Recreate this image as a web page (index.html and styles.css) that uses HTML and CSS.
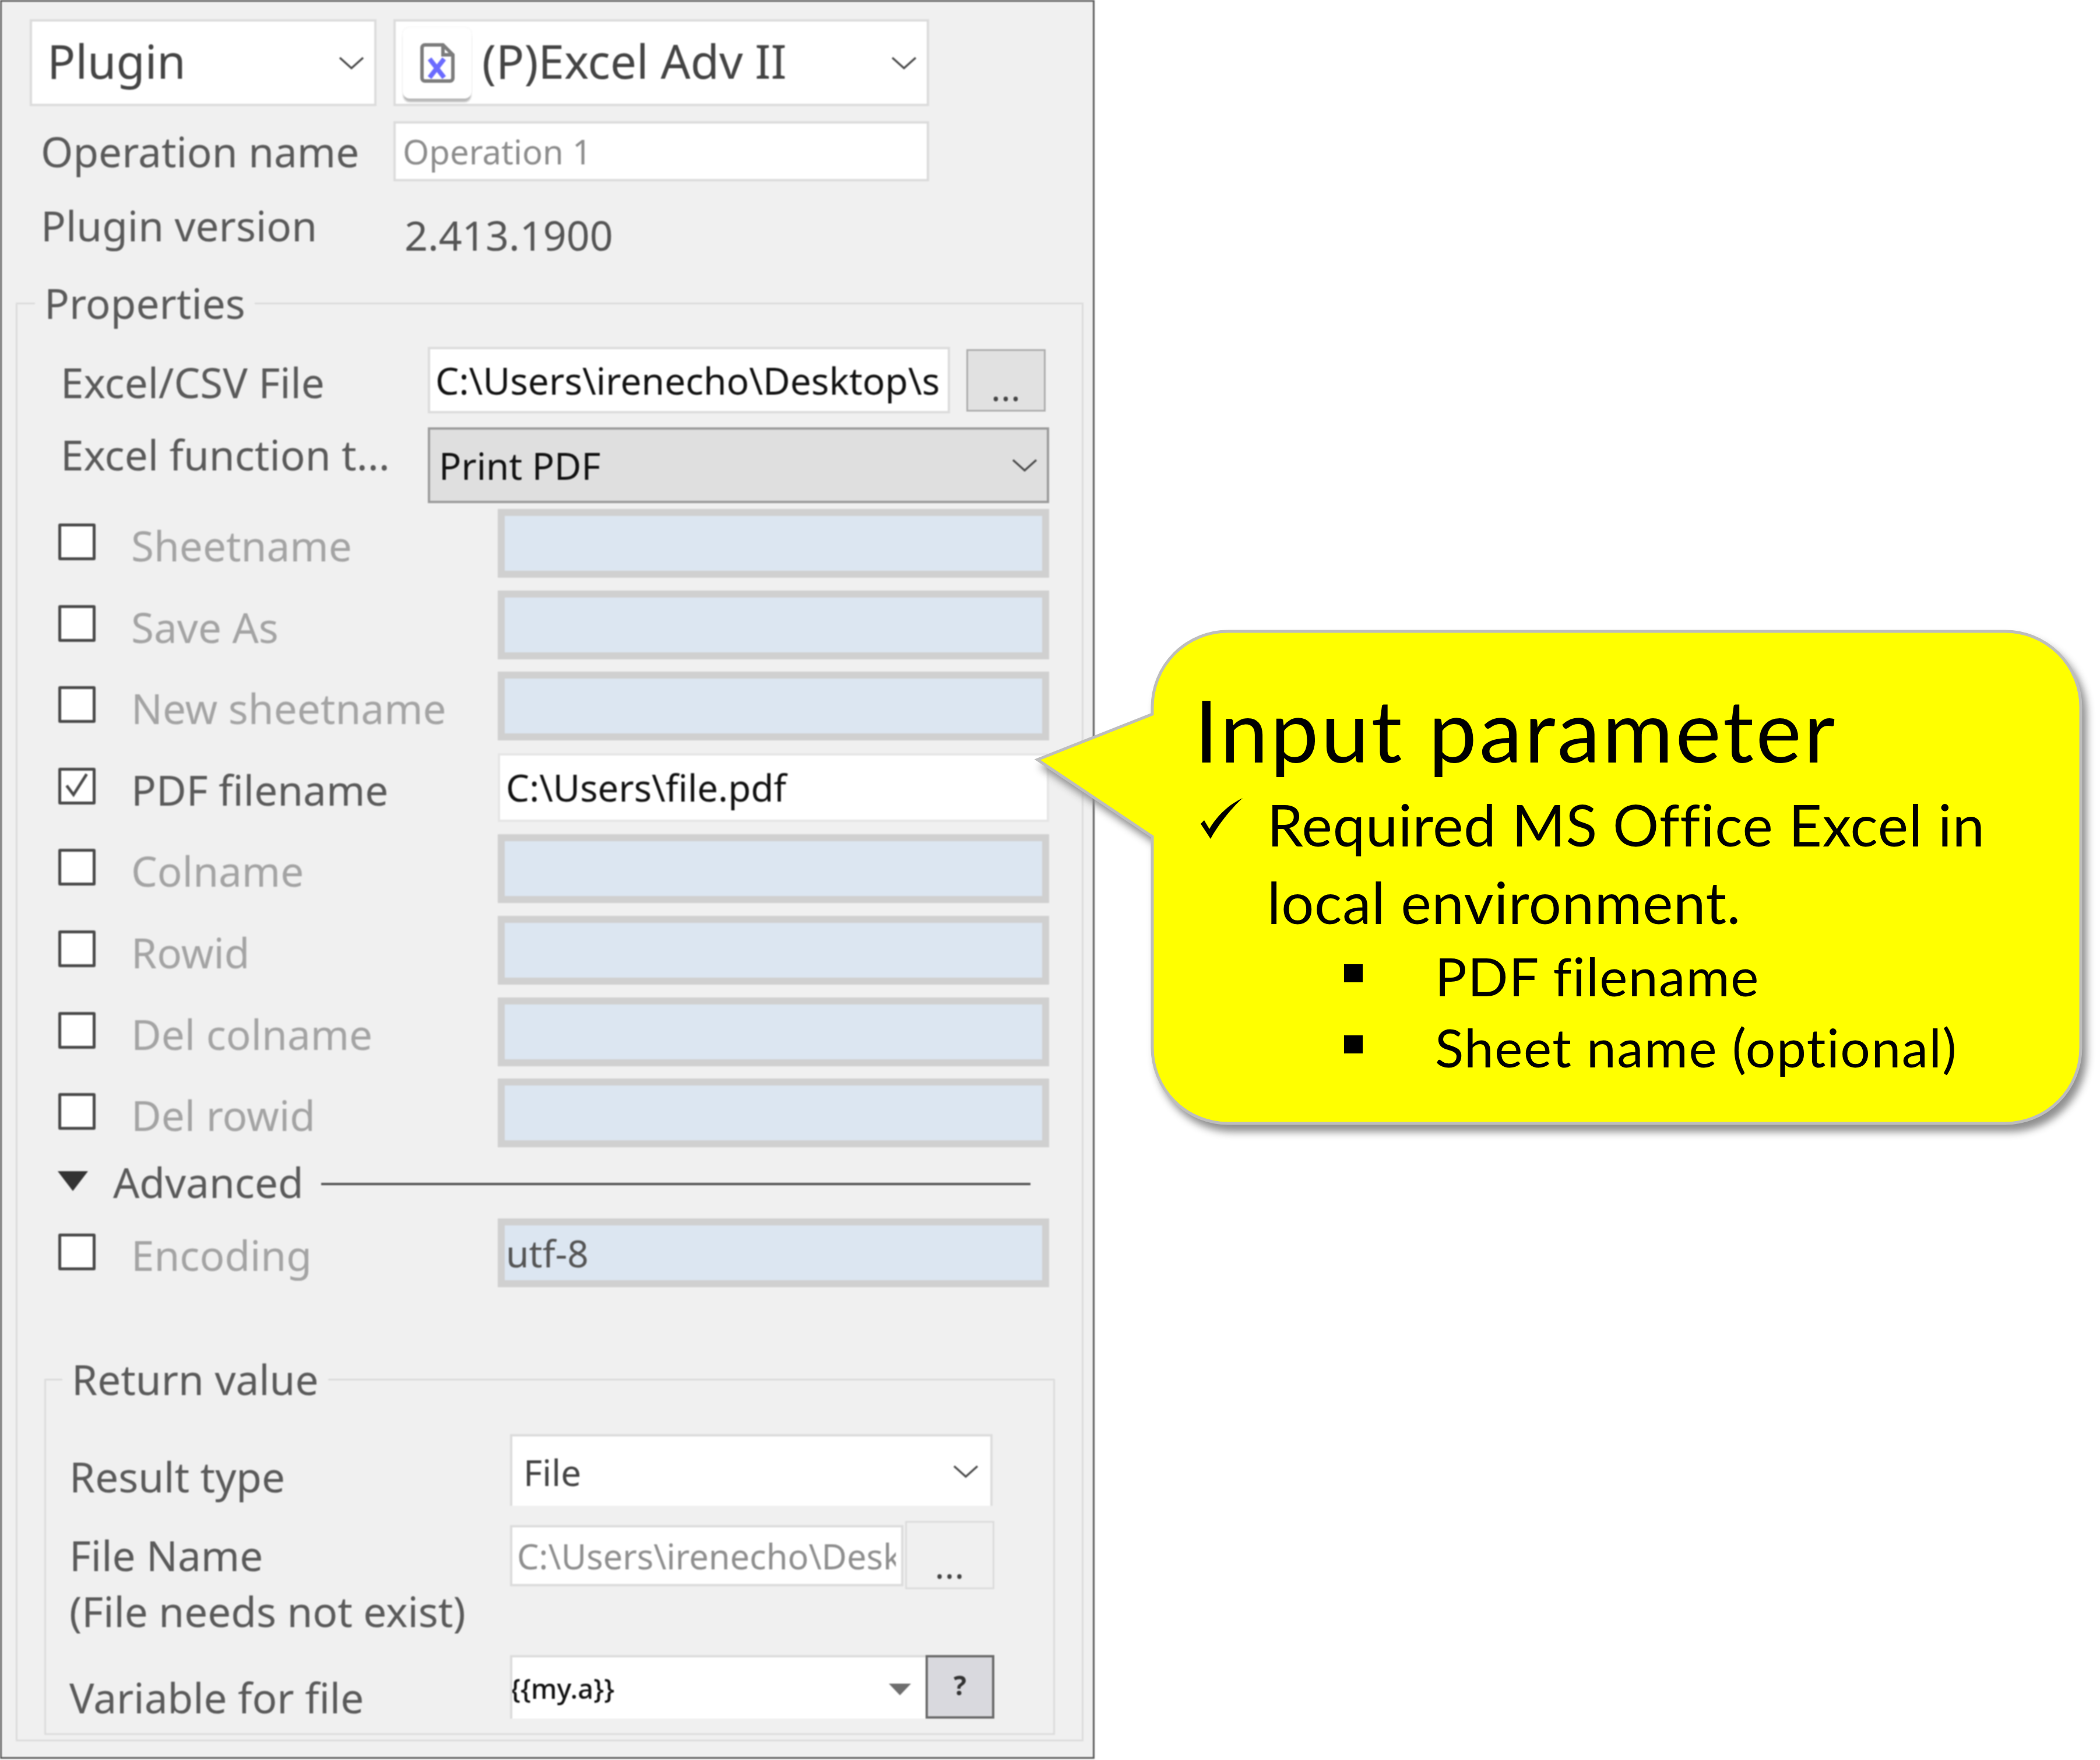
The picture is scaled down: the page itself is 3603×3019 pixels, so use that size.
FILE: index.html
```html
<!DOCTYPE html>
<html lang="en">
<head>
<meta charset="utf-8">
<title>Excel Adv II plugin properties</title>
<link rel="stylesheet" href="styles.css">
</head>
<body>
<div class="stage">
  <main class="panel">
    <div class="top-row">
      <div class="field combo combo-type"><span class="big">Plugin</span><svg class="chev" viewBox="0 0 44 24"><path d="M2 3 22 21 42 3"/></svg></div>
      <div class="field combo combo-plugin">
        <span class="iconbtn">
          <svg class="fileicon" viewBox="0 0 60 68"><path class="fi-out" d="M4 8a5 5 0 0 1 5-5h31l17 17v40a5 5 0 0 1-5 5H9a5 5 0 0 1-5-5z"/><path class="fi-fold" d="M40 3v17h17"/><path class="fi-x" d="M17 27 42 59M42 27 17 59"/></svg>
        </span>
        <span class="big">(P)Excel Adv II</span>
        <svg class="chev" viewBox="0 0 44 24"><path d="M2 3 22 21 42 3"/></svg>
      </div>
    </div>
    <div class="name-row">
      <label class="label head-label">Operation name</label>
      <div class="field opname">Operation 1</div>
    </div>
    <div class="version-row">
      <span class="label head-label">Plugin version</span>
      <span class="version">2.413.1900</span>
    </div>

    <fieldset class="group props">
      <legend class="label">Properties</legend>
      <div class="file-row">
        <span class="label prop-label">Excel/CSV File</span>
        <div class="field path">C:\Users\irenecho\Desktop\s</div>
        <div class="dots">...</div>
      </div>
      <div class="func-row">
        <span class="label prop-label func-label">Excel function t...</span>
        <div class="func-combo"><span>Print PDF</span><svg class="chev" viewBox="0 0 44 24"><path d="M2 3 22 21 42 3"/></svg></div>
      </div>
      <div class="options">
        <div class="opt"><span class="check"></span><span class="label off">Sheetname</span><div class="blue"></div></div>
        <div class="opt"><span class="check"></span><span class="label off">Save As</span><div class="blue"></div></div>
        <div class="opt"><span class="check"></span><span class="label off">New sheetname</span><div class="blue"></div></div>
        <div class="opt"><span class="check"><svg viewBox="0 0 54 54"><path d="M9 26 21 42 44 6"/></svg></span><span class="label">PDF filename</span><div class="field active">C:\Users\file.pdf</div></div>
        <div class="opt"><span class="check"></span><span class="label off">Colname</span><div class="blue"></div></div>
        <div class="opt"><span class="check"></span><span class="label off">Rowid</span><div class="blue"></div></div>
        <div class="opt"><span class="check"></span><span class="label off">Del colname</span><div class="blue"></div></div>
        <div class="opt"><span class="check"></span><span class="label off">Del rowid</span><div class="blue"></div></div>
      </div>
      <div class="adv-row">
        <svg class="tri" viewBox="0 0 52 34"><path d="M0 0H52L26 34z"/></svg>
        <span class="label">Advanced</span>
        <span class="adv-line"></span>
      </div>
      <div class="opt enc"><span class="check"></span><span class="label off">Encoding</span><div class="blue">utf-8</div></div>

      <fieldset class="group ret">
        <legend class="label">Return value</legend>
        <div class="ret-row result">
          <span class="label ret-label">Result type</span>
          <div class="field combo result-combo"><span>File</span><svg class="chev" viewBox="0 0 44 24"><path d="M2 3 22 21 42 3"/></svg></div>
        </div>
        <div class="ret-row filename">
          <span class="label ret-label two">File Name<br>(File needs not exist)</span>
          <div class="field path2"><span>C:\Users\irenecho\Desk</span></div>
          <div class="dots dots2">...</div>
        </div>
        <div class="ret-row variable">
          <span class="label ret-label">Variable for file</span>
          <div class="field var-combo"><span>{{my.a}}</span><svg class="mini" viewBox="0 0 38 20"><path d="M0 0H38L19 20z"/></svg></div>
          <div class="help">?</div>
        </div>
      </fieldset>
    </fieldset>
  </main>

  <aside class="callout">
    <svg class="bubble" viewBox="0 0 1833 880"><path d="M337 8H1670A130 130 0 0 1 1800 138V722A130 130 0 0 1 1670 852H337A130 130 0 0 1 207 722V360L10 228 207 150V138A130 130 0 0 1 337 8z"/></svg>
    <div class="callout-text">
      <h2>Input parameter</h2>
      <div class="req">
        <svg class="tick" viewBox="0 0 72 70"><path d="M0 44 6 38 15 53C28 30 50 10 72 0 52 18 30 46 17 70z"/></svg>
        <p>Required MS Office Excel in<br>local environment.</p>
      </div>
      <ul class="subs">
        <li>PDF filename</li>
        <li>Sheet name (optional)</li>
      </ul>
    </div>
  </aside>
</div>
</body>
</html>
```
FILE: styles.css
```css
* { box-sizing: border-box; }
html, body { margin: 0; padding: 0; background: #fff; }
body { font-family: "Noto Sans", "Open Sans", sans-serif; }
.stage { position: relative; width: 3603px; height: 3019px; overflow: hidden; }

.panel {
  width: 1878px; height: 3017px;
  background: #f0f0f0;
  border: 3px solid #5c5c5c;
  padding-top: 30px;
  filter: blur(0.8px);
}
.label { font-size: 71px; line-height: 80px; color: #5a5a5a; white-space: nowrap; }
.off { color: #a4a4a4; }
.field {
  background: #fff;
  border: 4px solid #dcdcdc;
  color: #111;
  font-size: 63.5px;
  display: flex; align-items: center;
  overflow: hidden; white-space: nowrap;
}
.chev { width: 44px; height: 24px; flex: none; fill: none; stroke: #4a4a4a; stroke-width: 3.5px; }
.big { font-size: 80px; color: #444; line-height: 100px; margin-bottom: 8px; }

.top-row { display: flex; gap: 29px; padding-left: 48px; }
.combo { height: 149px; justify-content: space-between; }
.combo-type { width: 595px; padding: 0 17px 0 26px; }
.combo-plugin { width: 919px; padding: 0 17px 0 12px; }
.combo-plugin .big { margin-left: 18px; margin-right: auto; }
.iconbtn {
  width: 118px; height: 122px; flex: none;
  background: #fff; border-radius: 12px;
  box-shadow: 0 7px 3px -1px #b8b8b8, 0 0 3px #e8e8e8;
  display: flex; align-items: center; justify-content: center;
}
.fileicon { width: 60px; height: 68px; fill: none; }
.fi-out, .fi-fold { stroke: #7c7c7c; stroke-width: 6px; }
.fi-x { stroke: #6b6bff; stroke-width: 8px; }

.name-row { display: flex; align-items: center; margin-top: 26px; }
.head-label { width: 672px; padding-left: 67px; flex: none; }
.opname { width: 919px; height: 103px; font-size: 58px; color: #8d8d8d; padding-left: 12px; }
.version-row { display: flex; height: 128px; padding-top: 36px; }
.version { font-size: 70px; line-height: 80px; color: #555; padding-left: 19px; margin-top: 16px; }

.group { margin: 0; padding: 0; border: 3px solid #dcdcdc; min-width: 0; }
.group legend { padding: 0 16px; }
.props { margin: 41px 16px 0 24px; height: 2507px; padding-top: 35px; }
.props > legend { margin-left: 30px; }

.file-row { display: flex; align-items: center; padding-left: 74px; }
.prop-label { width: 630px; flex: none; }
.file-row .prop-label { margin-top: 8px; }
.path { width: 896px; height: 114px; padding-left: 9px; font-size: 64px; }
.dots {
  width: 136px; height: 107px; margin-left: 28px;
  background: #e1e1e1; border: 3px solid #adadad;
  font-size: 60px; line-height: 60px; color: #444; letter-spacing: 1px;
  display: flex; align-items: flex-end; justify-content: center; padding-bottom: 8px;
}
.func-row { display: flex; align-items: flex-start; padding-left: 74px; margin-top: 24px; }
.func-label { margin-top: 7px; }
.func-combo {
  width: 1066px; height: 130px;
  background: #dfdfdf; border: 4px solid #9c9c9c;
  display: flex; align-items: center; justify-content: space-between;
  padding: 0 16px 0 15px;
  font-size: 63.5px; color: #111;
}

.options { display: flex; flex-direction: column; gap: 21.6px; margin-top: 10px; }
.opt { display: grid; grid-template-columns: 64px 690px 946px; align-items: center; padding-left: 70px; height: 118px; }
.opt .label { padding-left: 61px; margin-top: 8px; }
.check {
  width: 64px; height: 63px;
  background: #fff; border: 5px solid #4a4a4a; border-radius: 3px;
  margin-top: -5px; display: block;
}
.check svg { display: block; width: 54px; height: 53px; fill: none; stroke: #4a4a4a; stroke-width: 5px; }
.blue {
  height: 118px; background: #dce6f1; border: 12px solid #d0d0d0;
  font-size: 64px; color: #555; padding-left: 2px; line-height: 88px;
}
.active { height: 118px; padding-left: 10px; border-width: 4px; border-color: #e6e6e6; }

.adv-row { display: flex; align-items: center; height: 122px; padding-left: 69px; }
.tri { width: 52px; height: 34px; fill: #333; flex: none; margin-top: -6px; }
.adv-row .label { margin-left: 43px; margin-top: -2px; }
.adv-line { width: 1217px; height: 4px; background: #555; margin-left: 30px; margin-top: 4px; }
.enc { height: 118px; }
.enc .blue { height: 118px; line-height: 96px; }
.enc .check { margin-top: -3px; }
.enc .label { margin-top: 8px; }

.ret { margin: 118px 46px 0 46px; height: 650px; padding-top: 54px; }
.ret > legend { margin-left: 28px; }
.ret-row { display: flex; padding-left: 40px; }
.ret-label { width: 756px; flex: none; }
.result { height: 123px; }
.result .ret-label { margin-top: 33px; }
.result-combo {
  width: 828px; height: 123px; justify-content: space-between;
  border-bottom: 0; padding: 0 20px 0 19px;
  font-size: 62px; color: #444;
}
.result-combo span { margin-top: 2px; }
.filename { margin-top: 26px; height: 200px; }
.two { line-height: 96px; margin-top: 11px; }
.path2 {
  width: 675px; height: 105px; margin-top: 7px; padding-left: 8px;
  color: #8f8f8f; font-size: 59.5px;
}
.path2 span { display: block; width: 650px; overflow: hidden; }
.dots2 { width: 153px; height: 117px; margin-left: 3px; background: #f0f0f0; border-color: #dcdcdc; }
.variable { margin-top: 30px; height: 109px; }
.variable .ret-label { margin-top: 33px; }
.var-combo {
  width: 713px; height: 109px; justify-content: space-between;
  border-bottom: 0; border-right: 0; padding: 0 25px 0 0;
  font-size: 47px; font-weight: 500; color: #111;
}
.var-combo span { margin-left: -4px; }
.mini { width: 38px; height: 20px; fill: #6e6e6e; margin-top: 4px; }
.help {
  width: 118px; height: 109px;
  background: #d9d9de; border: 4px solid #6a6a6a;
  font-size: 46px; font-weight: 700; color: #333;
  display: flex; align-items: center; justify-content: center; padding-bottom: 8px;
}

/* Speech bubble laid over the panel */
.callout { position: absolute; left: 1770px; top: 1075px; width: 1833px; height: 880px; }
.bubble {
  position: absolute; inset: 0; width: 100%; height: 100%;
  fill: #ffff00; stroke: #bdbdbd; stroke-width: 5px;
  filter: drop-shadow(8px 12px 7px #8f8f8f);
}
.callout-text {
  position: relative;
  padding: 91px 0 0 279px;
  font-family: Lato, "Open Sans", sans-serif; color: #000;
}
.callout-text h2 { margin: 0 0 11px; font-size: 148px; line-height: 170px; font-weight: 400; letter-spacing: 3.8px; }
.req { display: flex; align-items: flex-start; font-size: 99px; line-height: 133px; letter-spacing: 0.8px; }
.tick { width: 72px; height: 70px; flex: none; margin: 22px 42px 0 11px; }
.req p { margin: 0; white-space: nowrap; }
.subs { list-style: none; margin: 0; padding: 0 0 0 257px; font-size: 91px; line-height: 122px; letter-spacing: 1.5px; }
.subs li { display: flex; align-items: center; gap: 124px; }
.subs li::before { content: ""; width: 32px; height: 31px; background: #000; flex: none; margin-top: -10px; }
```
